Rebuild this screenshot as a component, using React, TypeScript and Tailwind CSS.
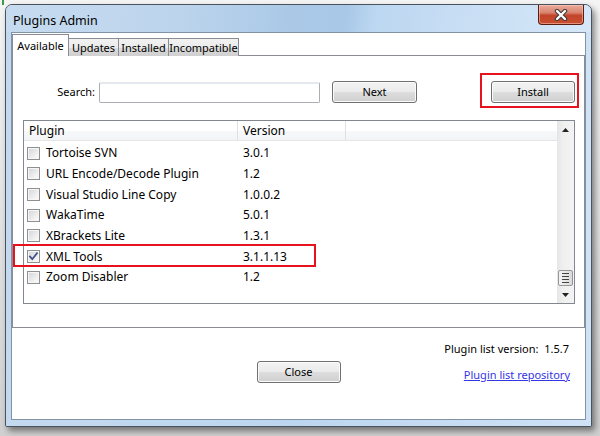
import React from "react";

const plugins: { name: string; version: string; checked?: boolean }[] = [
  { name: "Tortoise SVN", version: "3.0.1" },
  { name: "URL Encode/Decode Plugin", version: "1.2" },
  { name: "Visual Studio Line Copy", version: "1.0.0.2" },
  { name: "WakaTime", version: "5.0.1" },
  { name: "XBrackets Lite", version: "1.3.1" },
  { name: "XML Tools", version: "3.1.1.13", checked: true },
  { name: "Zoom Disabler", version: "1.2" },
];

function Checkbox({ checked }: { checked?: boolean }) {
  return (
    <div className="w-[13px] h-[13px] border border-[#8e8f8f] bg-[linear-gradient(135deg,#d2d4d8_0%,#f2f2f2_70%,#fbfbfb_100%)] shadow-[inset_0_0_0_1px_#f6f6f6] flex items-center justify-center shrink-0">
      {checked && (
        <svg width="11" height="11" viewBox="0 0 11 11">
          <path d="M2 5.5 L4.3 8.2 L9 2.2" fill="none" stroke="#3f518a" strokeWidth="1.8" strokeLinecap="square" />
        </svg>
      )}
    </div>
  );
}

function Button({ label, w }: { label: string; w: string }) {
  return (
    <div
      className={`${w} h-[22px] border border-[#707070] rounded-[3px] bg-[linear-gradient(to_bottom,#f3f3f3_0%,#ebebeb_48%,#dddddd_52%,#cfcfcf_100%)] shadow-[inset_0_0_0_1px_#fbfbfb] flex items-center justify-center text-[11px] text-black`}
    >
      {label}
    </div>
  );
}

export default function App() {
  return (
    <div className="w-[600px] h-[436px] bg-[linear-gradient(to_bottom,#f4f4f4_0%,#d0d0d0_100%)] relative overflow-hidden pt-[4px] pl-[5px] font-['Noto_Sans',sans-serif] text-[12px] leading-[16px] text-black">
      <div className="absolute left-[2px] top-0 w-[2px] h-[5px] bg-[#3c9a4a]" />
      {/* window */}
      <div className="w-[587px] h-[423px] border border-[#4a525d] rounded-t-[7px] rounded-b-[2px] flex flex-col bg-[#c0d7ee] shadow-[3px_4px_6px_rgba(0,0,0,0.45)] overflow-hidden">
        {/* title bar */}
        <div className="h-[27px] shrink-0 flex items-start justify-between bg-[linear-gradient(100deg,#c6dbf0_0%,#bcd4ec_30%,#abc9e7_48%,#a9c8e7_58%,#bcd7f1_63%,#c8def4_78%,#d6e7f8_100%)]">
          <div className="pl-[7px] pt-[8px] text-[12.5px] leading-[16px] text-black">Plugins Admin</div>
          <div className="mr-[7px] w-[46px] h-[20px] border border-t-0 border-[#5b1d12] rounded-b-[4px] bg-[linear-gradient(to_bottom,#e9ab9b_0%,#d98570_40%,#c2442a_55%,#c9502f_100%)] shadow-[inset_0_0_0_1px_rgba(255,210,200,0.5)] flex items-center justify-center">
            <svg width="14" height="12" viewBox="0 0 14 12">
              <path d="M3 2 L11 10 M11 2 L3 10" stroke="#3a3a3a" strokeWidth="4.4" strokeLinecap="round" />
              <path d="M3 2 L11 10 M11 2 L3 10" stroke="#ffffff" strokeWidth="2.4" strokeLinecap="round" />
            </svg>
          </div>
        </div>
        {/* body frame */}
        <div className="flex-1 px-[5px] pb-[6px] flex bg-[linear-gradient(to_right,#c3d9ef,#bdd6ef_50%,#cfe2f6)]">
          <div className="flex-1 border border-[#8393a6] bg-white flex flex-col">
            {/* tabs */}
            <div className="h-[23px] -mb-[1px] flex items-end relative z-10 text-[11px] leading-[14px]">
              <div className="w-[57px] h-[22px] border border-b-0 border-[#898c95] bg-white flex justify-center pt-[4px]">
                Available
              </div>
              {["Updates", "Installed", "Incompatible"].map((t, i) => (
                <div
                  key={t}
                  className={`${i === 0 ? "w-[50px] border-l-0" : i === 1 ? "w-[51px] ml-[-1px]" : "w-[71px] ml-[-1px]"} h-[18px] border border-b-0 border-[#898c95] bg-[linear-gradient(to_bottom,#f2f2f2_0%,#ebebeb_50%,#dddddd_51%,#cfcfcf_100%)] flex justify-center pt-[2px]`}
                >
                  {t}
                </div>
              ))}
            </div>
            {/* panel */}
            <div className="h-[273px] border border-[#898c95] bg-white flex flex-col shrink-0">
              <div className="mt-[25px] h-[22px] flex items-center">
                <div className="w-[82px] text-right text-[11px]">Search:</div>
                <div className="ml-[4px] w-[221px] h-[21px] border border-[#abadb3] border-t-[#e3e9ef] rounded-[2px] bg-white shadow-[inset_0_1px_0_#e5e9ee]" />
                <div className="ml-[12px]">
                  <Button label="Next" w="w-[85px]" />
                </div>
                <div className="ml-[74px]">
                  <Button label="Install" w="w-[84px]" />
                </div>
              </div>
              {/* list */}
              <div className="mt-[17px] ml-[10px] w-[552px] h-[184px] border border-[#828790] flex">
                <div className="flex-1 flex flex-col">
                  <div className="h-[20px] flex border-b border-[#e5e5e5] bg-[linear-gradient(to_bottom,#ffffff_0%,#ffffff_50%,#f7f8f9_51%,#f3f4f5_100%)]">
                    <div className="w-[214px] border-r border-[#e0e0e0] pl-[5px] flex items-center">Plugin</div>
                    <div className="w-[108px] border-r border-[#e0e0e0] pl-[5px] flex items-center">Version</div>
                  </div>
                  <div className="pt-[2px] flex flex-col">
                    {plugins.map((p) => (
                      <div key={p.name} className="h-[20.67px] flex items-center">
                        <div className="w-[214px] pl-[3px] flex items-center gap-[6px]">
                          <Checkbox checked={p.checked} />
                          <span>{p.name}</span>
                        </div>
                        <div className="pl-[5px]">{p.version}</div>
                      </div>
                    ))}
                  </div>
                </div>
                {/* scrollbar */}
                <div className="w-[17px] bg-[linear-gradient(to_right,#e6e6e6,#f0f0f0_40%,#f3f3f3)] flex flex-col items-center">
                  <div className="h-[17px] w-full flex items-center justify-center">
                    <svg width="7" height="4" viewBox="0 0 7 4">
                      <path d="M3.5 0 L7 4 L0 4 Z" fill="#222" />
                    </svg>
                  </div>
                  <div className="flex-1" />
                  <div className="w-[15px] h-[16px] border border-[#979797] rounded-[2px] bg-[linear-gradient(to_right,#f3f3f3,#e8e8e8_50%,#d9d9d9)] flex flex-col items-center justify-center gap-[2px]">
                    <div className="w-[7px] h-[1px] bg-[#444]" />
                    <div className="w-[7px] h-[1px] bg-[#444]" />
                    <div className="w-[7px] h-[1px] bg-[#444]" />
                    <div className="w-[7px] h-[1px] bg-[#444]" />
                  </div>
                  <div className="h-[17px] w-full flex items-center justify-center">
                    <svg width="7" height="4" viewBox="0 0 7 4">
                      <path d="M0 0 L7 0 L3.5 4 Z" fill="#222" />
                    </svg>
                  </div>
                </div>
              </div>
            </div>
            {/* bottom area */}
            <div className="flex-1 flex flex-col text-[11px]">
              <div className="mt-[13px] pr-[16px] flex justify-end">
                <span>Plugin list version:&nbsp;&nbsp;1.5.7</span>
              </div>
              <div className="mt-[4px] grid grid-cols-[1fr_auto_1fr] items-end">
                <div />
                <Button label="Close" w="w-[84px]" />
                <div className="flex justify-end pr-[15px]">
                  <span className="text-[#3535e8] underline">Plugin list repository</span>
                </div>
              </div>
            </div>
          </div>
        </div>
      </div>
      {/* annotation highlights */}
      <div className="absolute left-[480px] top-[73px] w-[99px] h-[35px] border-2 border-[#e8121c]" />
      <div className="absolute left-[13px] top-[244px] w-[303px] h-[23px] border-2 border-[#e8121c]" />
    </div>
  );
}
